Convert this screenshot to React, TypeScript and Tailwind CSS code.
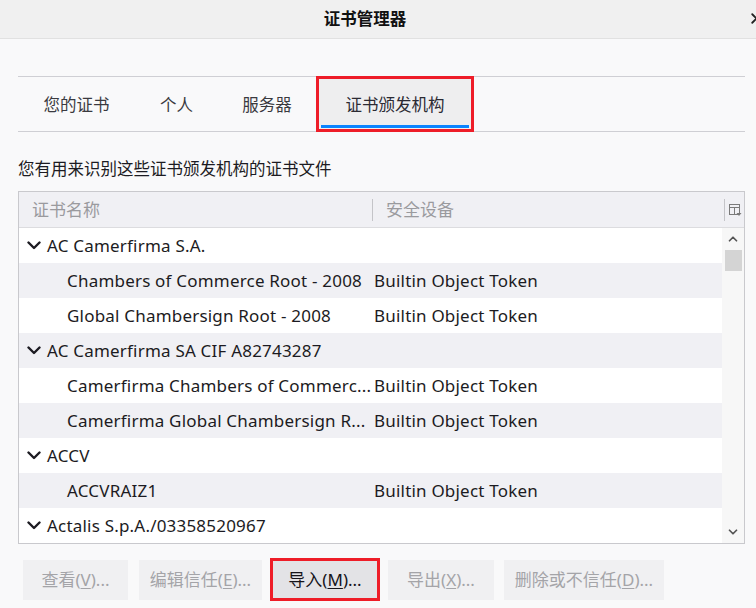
import { ChevronDown, ChevronUp, X } from "lucide-react";

const font = { fontFamily: '"Noto Sans", "Noto Sans CJK SC", sans-serif' };

type Row = { name: string; device?: string; group?: boolean };

const rows: Row[] = [
  { name: "AC Camerfirma S.A.", group: true },
  { name: "Chambers of Commerce Root - 2008", device: "Builtin Object Token" },
  { name: "Global Chambersign Root - 2008", device: "Builtin Object Token" },
  { name: "AC Camerfirma SA CIF A82743287", group: true },
  { name: "Camerfirma Chambers of Commerc...", device: "Builtin Object Token" },
  { name: "Camerfirma Global Chambersign R...", device: "Builtin Object Token" },
  { name: "ACCV", group: true },
  { name: "ACCVRAIZ1", device: "Builtin Object Token" },
  { name: "Actalis S.p.A./03358520967", group: true },
];

const tabs = [
  { label: "您的证书", w: "w-[117px]" },
  { label: "个人", w: "w-[83px]" },
  { label: "服务器", w: "w-[98px]" },
];

function Mnemonic({ pre, k, post }: { pre: string; k: string; post: string }) {
  return (
    <span>
      {pre}
      <span className="underline underline-offset-2">{k}</span>
      {post}
    </span>
  );
}

function Twisty() {
  return (
    <svg width="14" height="9" viewBox="0 0 14 9" fill="none" stroke="#1c1b22" strokeWidth="2.4" strokeLinecap="round" strokeLinejoin="round">
      <polyline points="1.5,1.5 7,7 12.5,1.5" />
    </svg>
  );
}

function ColumnPicker() {
  return (
    <svg width="14" height="14" viewBox="0 0 14 14" fill="none" stroke="#7a7a7a" strokeWidth="1">
      <rect x="1.5" y="1.5" width="10" height="10" />
      <line x1="1.5" y1="4.5" x2="11.5" y2="4.5" />
      <line x1="6.5" y1="4.5" x2="6.5" y2="11.5" />
      <path d="M8.5 10 L13.5 10 L11 13 Z" fill="#7a7a7a" stroke="none" />
    </svg>
  );
}

export default function App() {
  return (
    <div className="w-[756px] h-[608px] overflow-hidden bg-[#f9f9fa] text-[#1c1b22] flex flex-col" style={font}>
      {/* Title bar */}
      <div className="relative h-[39px] shrink-0 bg-[#f0f0f0] border-b border-[#e1e1e1] flex items-center justify-center pr-[26px]">
        <span className="text-[16.5px] font-bold text-[#111]">证书管理器</span>
        <X className="absolute right-[-9px] top-[10px]" size={17} strokeWidth={2.6} color="#222" />
      </div>

      {/* Tabs */}
      <div className="mt-[37px] mx-[18px] mr-[11px] h-[56px] border-y border-[#cfcfd4] flex">
        {tabs.map((t) => (
          <div key={t.label} className={`${t.w} flex items-center justify-center pt-[3px] text-[16.5px] text-[#3a3a3f]`}>
            {t.label}
          </div>
        ))}
        <div className="relative -my-px w-[158px] border-[3px] border-[#ee1d28] bg-[#eeeeef] flex items-center justify-center pt-[3px] text-[16.5px] text-[#2b2a33]">
          证书颁发机构
          <div className="absolute left-[2px] right-[2px] bottom-[1px] h-[3px] bg-[#0a84ff]" />
        </div>
      </div>

      {/* Description */}
      <div className="mt-[25px] ml-[18px] text-[16.5px] leading-[24px] text-[#1c1b22]">您有用来识别这些证书颁发机构的证书文件</div>

      {/* Tree */}
      <div className="mt-[10px] ml-[18px] w-[727px] h-[353px] border border-[#c9c9cd] bg-white flex flex-col">
        <div className="h-[36px] shrink-0 bg-[#f0f0f4] border-b border-[#dcdcdf] flex items-center text-[17px] text-[#9a9a9e]">
          <div className="w-[353px] pl-[13px]">证书名称</div>
          <div className="w-px h-[22px] bg-[#c4c4c8]" />
          <div className="flex-1 pl-[13px]">安全设备</div>
          <div className="w-px h-[22px] bg-[#c4c4c8]" />
          <div className="w-[19px] flex items-center justify-center">
            <ColumnPicker />
          </div>
        </div>
        <div className="flex-1 flex min-h-0">
          <div className="flex-1 flex flex-col">
            {rows.map((r, i) => (
              <div
                key={i}
                className={`h-[35px] shrink-0 flex items-center text-[17px] tracking-[0.2px] ${i % 2 === 1 ? "bg-[#f0f0f4]" : "bg-white"}`}
              >
                {r.group ? (
                  <div className="flex items-center pl-[8px]">
                    <Twisty />
                    <span className="ml-[6px]">{r.name}</span>
                  </div>
                ) : (
                  <>
                    <div className="w-[355px] pl-[48px] whitespace-nowrap overflow-hidden">{r.name}</div>
                    <div>{r.device}</div>
                  </>
                )}
              </div>
            ))}
          </div>
          {/* Scrollbar */}
          <div className="w-[22px] shrink-0 bg-[#f7f7f7] flex flex-col items-center">
            <ChevronUp className="mt-[4px]" size={14} strokeWidth={3} color="#555" />
            <div className="mt-[4px] w-[17px] h-[21px] bg-[#d4d4d4]" />
            <div className="flex-1" />
            <ChevronDown className="mb-[4px]" size={14} strokeWidth={3} color="#555" />
          </div>
        </div>
      </div>

      {/* Buttons */}
      <div className="mt-[14px] ml-[23px] flex items-center text-[17px]">
        <div className="w-[105px] h-[40px] flex items-center justify-center bg-[#f0f0f2] text-[#a4a4a8]">
          <Mnemonic pre="查看(" k="V" post=")..." />
        </div>
        <div className="ml-[11px] w-[123px] h-[40px] flex items-center justify-center bg-[#f0f0f2] text-[#a4a4a8]">
          <Mnemonic pre="编辑信任(" k="E" post=")..." />
        </div>
        <div className="ml-[8px] w-[110px] h-[43px] flex items-center justify-center border-[3px] border-[#ee1d28] bg-[#e3e3e6] text-[#15141a]">
          <Mnemonic pre="导入(" k="M" post=")..." />
        </div>
        <div className="ml-[8px] w-[106px] h-[40px] flex items-center justify-center bg-[#f0f0f2] text-[#a4a4a8]">
          <Mnemonic pre="导出(" k="X" post=")..." />
        </div>
        <div className="ml-[10px] w-[160px] h-[40px] flex items-center justify-center bg-[#f0f0f2] text-[#a4a4a8]">
          <Mnemonic pre="删除或不信任(" k="D" post=")..." />
        </div>
      </div>
    </div>
  );
}
